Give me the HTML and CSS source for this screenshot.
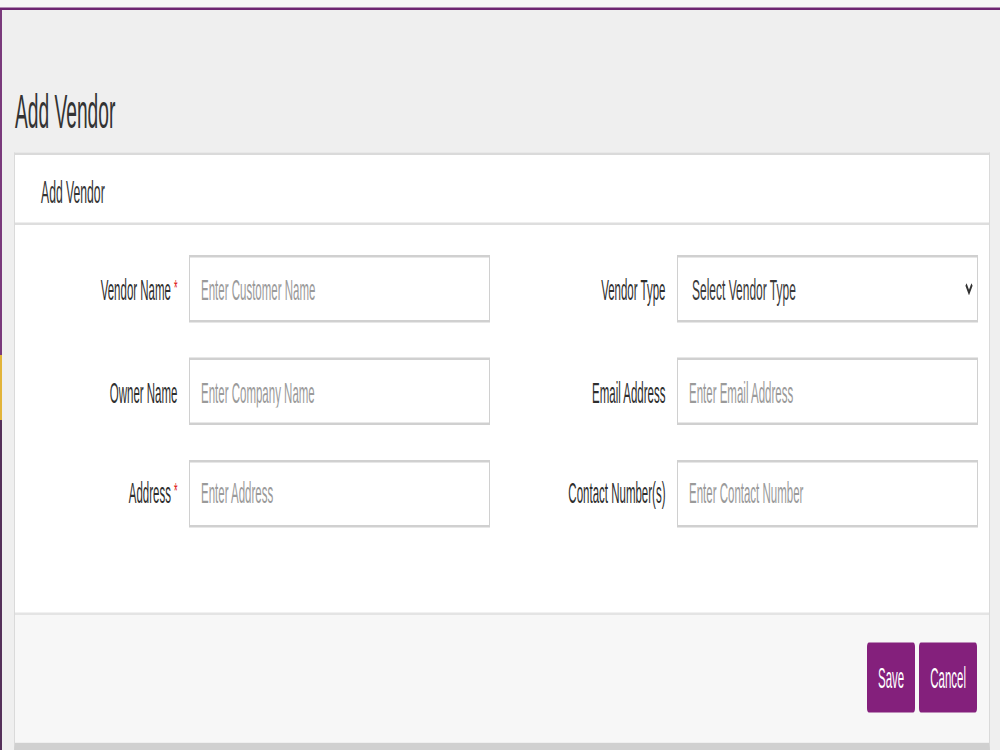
FILE: index.html
```html
<!DOCTYPE html>
<html lang="en">
<head>
  <meta charset="UTF-8" />
  <meta name="viewport" content="width=device-width, initial-scale=1.0"/>
  <title>Add Vendor</title>
  <link rel="stylesheet" href="styles.css">
</head>
<body>

  <div class="page">
    <div class="frame">
      <!-- edge of the side menu -->
      <div class="side-edge">
        <span class="edge-mark"></span>
      </div>

      <main class="content">
        <h1 class="page-title">Add Vendor</h1>

        <section class="card">
          <div class="card-header">Add Vendor</div>

          <form class="card-body" id="vendor-form">
            <div class="field">
              <label for="vendor-name">Vendor Name<span class="req">*</span></label>
              <input type="text" id="vendor-name" placeholder="Enter Customer Name" />
            </div>
            <div class="field">
              <label for="vendor-type">Vendor Type</label>
              <div class="select-wrap">
                <select id="vendor-type">
                  <option>Select Vendor Type</option>
                </select>
                <svg class="chevron" viewBox="0 0 8 5" width="8" height="5">
                  <path d="M1 0.8 L4 4 L7 0.8" fill="none" stroke="#333" stroke-width="1.6"/>
                </svg>
              </div>
            </div>

            <div class="field">
              <label for="owner-name">Owner Name</label>
              <input type="text" id="owner-name" placeholder="Enter Company Name" />
            </div>
            <div class="field">
              <label for="email">Email Address</label>
              <input type="text" id="email" placeholder="Enter Email Address" />
            </div>

            <div class="field">
              <label for="address">Address<span class="req">*</span></label>
              <input type="text" id="address" placeholder="Enter Address" />
            </div>
            <div class="field">
              <label for="contact">Contact Number(s)</label>
              <input type="text" id="contact" placeholder="Enter Contact Number" />
            </div>
          </form>

          <div class="card-footer">
            <button type="submit" form="vendor-form" class="btn">Save</button>
            <button type="button" class="btn">Cancel</button>
          </div>
        </section>
      </main>
    </div>
  </div>

</body>
</html>
```

FILE: styles.css
```css
html {
  height: 750px;
  background-color: #f6f6f6;
  overflow: hidden;
}

body {
  margin: 0;
  height: 750px;
  font-family: "Liberation Sans", Arial, sans-serif;
  color: #333;
}

/* the screenshot is stretched, so the page is laid out flat and scaled up */
.page {
  box-sizing: border-box;
  width: 1000px;
  height: 300px;
  padding-top: 3px;
  transform: scaleY(2.5);
  transform-origin: 0 0;
}

.frame {
  display: flex;
  height: 297px;
  border-top: 1px solid #6e2672;
}

.side-edge {
  width: 2px;
  background: linear-gradient(#7a3a7c 0, #7a3a7c 139px, #55305a 165px, #55305a 100%);
  display: flex;
  flex-direction: column;
}

.edge-mark {
  display: block;
  margin-top: 138px;
  height: 26px;
  background-color: #e2b43a;
}

.content {
  flex: 1;
  background-color: #efefef;
  padding: 31.4px 10px 0 12px;
}

.page-title {
  margin: 0 0 7px 1px;
  font-size: 19.2px;
  line-height: 19px;
  font-weight: normal;
  color: #333;
}

.card {
  background-color: #fff;
  border: 1px solid #dadada;
  border-bottom: 3px solid #d0d0d0;
}

.card-header {
  box-sizing: border-box;
  height: 27.8px;
  padding: 3.2px 26px 0;
  display: flex;
  align-items: center;
  font-size: 12.2px;
  color: #333;
  border-bottom: 1px solid #dedede;
}

.card-body {
  box-sizing: border-box;
  height: 156.2px;
  margin: 0;
  padding: 12px 11px 0 0;
  display: grid;
  grid-template-columns: 475px 475px;
  column-gap: 13px;
  row-gap: 13.6px;
  align-content: start;
  border-bottom: 1px solid #e4e4e4;
}

.field {
  display: flex;
  align-items: center;
  height: 27.2px;
}

.field label {
  width: 174px;
  flex-shrink: 0;
  box-sizing: border-box;
  padding-right: 11.5px;
  text-align: right;
  font-size: 11.5px;
  color: #2e2e2e;
}

.req {
  color: #e02020;
  font-size: 9px;
  margin-left: 3px;
  vertical-align: 2px;
}

.field input,
.field select {
  box-sizing: border-box;
  width: 301px;
  height: 27.2px;
  margin: 0;
  border: 1px solid #d0d0d0;
  border-radius: 0;
  background-color: #fff;
  font-family: "Liberation Sans", Arial, sans-serif;
  font-size: 11.5px;
  outline: none;
}

.field input {
  padding: 0 11px;
}

.field input::placeholder {
  color: #9a9a9a;
}

.select-wrap {
  position: relative;
  width: 301px;
  height: 27.2px;
}

.field select {
  appearance: none;
  -webkit-appearance: none;
  padding: 0 20px 0 14px;
  color: #3a3a3a;
  font-size: 12px;
}

.chevron {
  position: absolute;
  right: 5px;
  top: 11px;
  pointer-events: none;
}

.card-footer {
  box-sizing: border-box;
  height: 50.8px;
  padding: 11px 12px 0 0;
  background-color: #f7f7f7;
  display: flex;
  justify-content: flex-end;
  align-items: flex-start;
  gap: 4px;
}

.btn {
  height: 27.6px;
  padding: 0 11px;
  background-color: #84207c;
  color: #fff;
  border: none;
  border-radius: 2px;
  font-family: "Liberation Sans", Arial, sans-serif;
  font-size: 11.5px;
  cursor: pointer;
}

.btn:hover {
  background-color: #6f1a68;
}
```
